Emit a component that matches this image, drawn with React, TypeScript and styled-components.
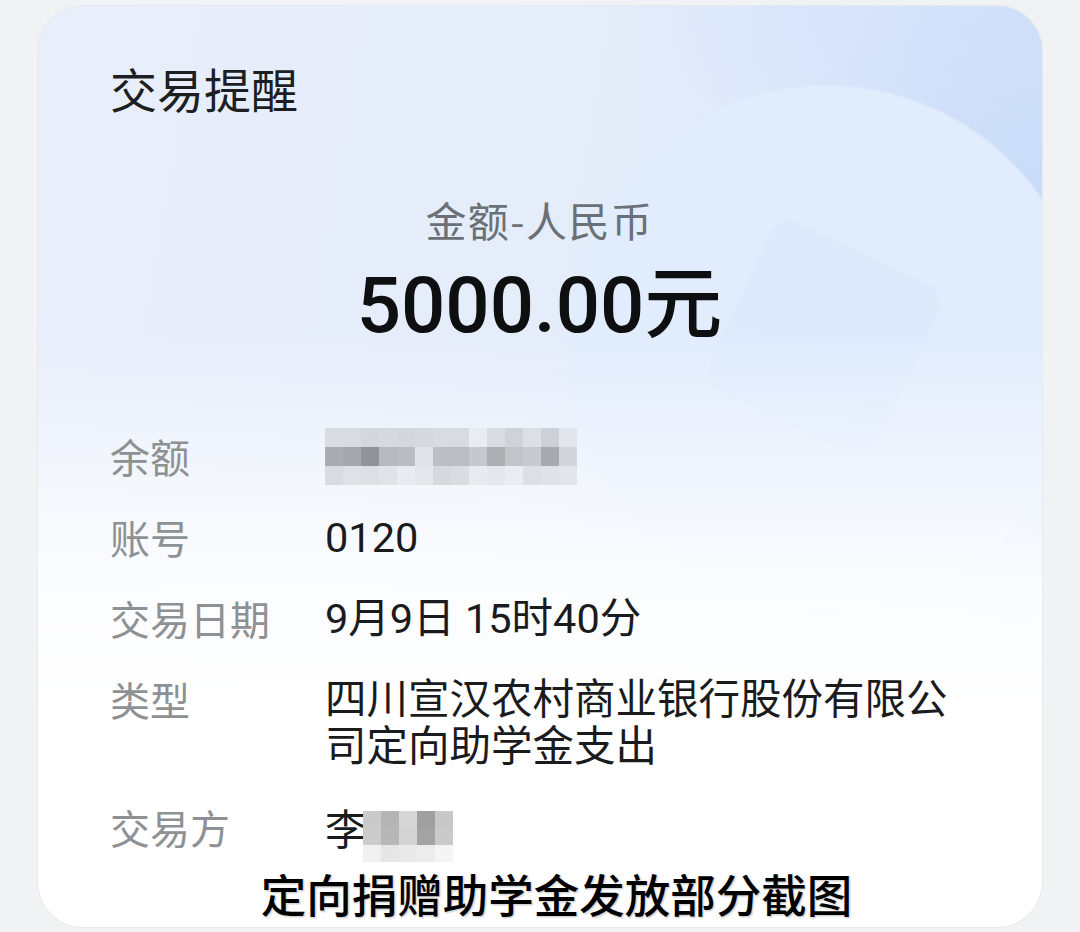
import React from "react";
import styled, { createGlobalStyle } from "styled-components";

const Global = createGlobalStyle`
  html, body { margin: 0; padding: 0; background: #f1f2f4; }
  body { font-family: Roboto, "Noto Sans CJK SC", sans-serif; }
`;

const Page = styled.div`
  width: 1080px;
  height: 932px;
  box-sizing: border-box;
  padding: 5px 37px 4px;
  display: flex;
  background: #f1f2f4;
`;

const Card = styled.div`
  position: relative;
  flex: 1;
  box-sizing: border-box;
  border-radius: 46px;
  border: 1px solid #e7e9ed;
  overflow: hidden;
  padding: 54px 73px 10px 72px;
  display: flex;
  flex-direction: column;
  background:
    linear-gradient(180deg, rgba(255,255,255,0) 0px, rgba(255,255,255,0) 330px, rgba(255,255,255,0.55) 480px, rgba(255,255,255,0.85) 580px, #ffffff 700px),
    radial-gradient(circle 262px at 789px 340px, #e1ecfc 0, #e1ecfc 259px, rgba(225,236,252,0) 262px),
    radial-gradient(ellipse 260px 240px at 100% 190px, rgba(198,218,248,0.9) 0%, rgba(202,220,248,0.5) 55%, rgba(205,222,249,0) 100%),
    radial-gradient(ellipse 420px 230px at 100% 0%, #d1e0fa 0%, rgba(212,226,250,0.6) 60%, rgba(220,232,251,0) 100%),
    linear-gradient(100deg, #e8eefa 0%, #e5edfa 45%, #e0eafb 75%, #dbe7fb 100%);
`;

const Diamond = styled.div`
  position: absolute;
  left: 693px;
  top: 239px;
  width: 186px;
  height: 186px;
  border-radius: 22px;
  transform: rotate(25deg);
  background: linear-gradient(160deg, rgba(210,225,250,0.3), rgba(222,234,252,0.1));
  pointer-events: none;
`;

const Content = styled.div`
  position: relative;
  display: flex;
  flex-direction: column;
`;

const Title = styled.h1`
  margin: 0;
  font-family: "Noto Sans CJK SC", sans-serif;
  font-size: 47px;
  line-height: 56px;
  font-weight: 400;
  color: #1c1e22;
`;

const AmountBlock = styled.div`
  display: flex;
  flex-direction: column;
  align-items: center;
  margin-top: 79px;
`;

const Currency = styled.div`
  font-family: "Noto Sans CJK SC", sans-serif;
  font-size: 41px;
  line-height: 48px;
  letter-spacing: 1.5px;
  color: #6a7076;
`;

const Amount = styled.div`
  margin-top: 16px;
  font-family: Roboto, "Noto Sans CJK SC", sans-serif;
  font-size: 78px;
  line-height: 94px;
  font-weight: 500;
  color: #0e0f10;
`;

const Rows = styled.div`
  display: flex;
  flex-direction: column;
  gap: 34px;
  margin-top: 80px;
`;

const Row = styled.div`
  display: grid;
  grid-template-columns: 215px 1fr;
  align-items: start;
`;

const Label = styled.div`
  font-family: "Noto Sans CJK SC", sans-serif;
  font-size: 40px;
  line-height: 47px;
  color: #8e9194;
`;

const Value = styled.div`
  display: flex;
  align-items: center;
  font-family: Roboto, "Noto Sans CJK SC", sans-serif;
  font-size: 41.5px;
  line-height: 47px;
  color: #1a1b1d;
  min-height: 47px;
`;

const Mosaic = styled.div<{ $cols: number; $cell: number; $rowH: number }>`
  display: grid;
  grid-template-columns: repeat(${(p) => p.$cols}, ${(p) => p.$cell}px);
  grid-auto-rows: ${(p) => p.$rowH}px;
  margin: -5px 0;
`;

const Cell = styled.div<{ $c: string }>`
  background: ${(p) => p.$c};
`;

const Caption = styled.div`
  margin-top: 9px;
  padding-left: 34px;
  text-align: center;
  font-family: "Noto Sans CJK SC", sans-serif;
  font-size: 45.5px;
  line-height: 54px;
  font-weight: 500;
  color: #000;
  text-shadow: 0 0 3px #fff, 1px 1px 2px rgba(0,0,0,0.35);
`;

const balanceCells = [
  ["#d9dce2", "#d8dbe1", "#d4d7de", "#d6d9df", "#d4d7de", "#d6d9df", "#d8dbe1", "#d8dbe1", "#e8ecf3", "#d9dce2", "#cfd3d9", "#dcdfe5", "#cdd0d6", "#e2e6ec"],
  ["#a9acb2", "#a5a8ae", "#909398", "#b7bac0", "#b9bcc2", "#e0e3e9", "#bbbec4", "#babdc3", "#c5c8ce", "#acafb2", "#c2c5ca", "#c7cacf", "#a6a9ae", "#d2d5da"],
  ["#d8dbe1", "#dfe2e6", "#dcdfe4", "#e0e3e8", "#e8ebef", "#e4e7eb", "#d6d9de", "#d9dce1", "#e7eaee", "#e4e7eb", "#e9ecf0", "#dcdfe3", "#dfe2e6", "#e2e5e9"],
];

const nameCells = [
  ["#cacaca", "#b5b5b5", "#d6d6d6", "#a0a0a0", "#c8c8c8"],
  ["#cbcbcb", "#b7b7b7", "#d4d4d4", "#a3a3a3", "#cacaca"],
  ["#f0f0f0", "#e6e6e6", "#e9e9e9", "#ececec", "#f5f5f5"],
];

function Pixelated({ grid, cell, rowH }: { grid: string[][]; cell: number; rowH: number }) {
  return (
    <Mosaic $cols={grid[0].length} $cell={cell} $rowH={rowH}>
      {grid.flat().map((c, i) => (
        <Cell key={i} $c={c} />
      ))}
    </Mosaic>
  );
}

const NameWrap = styled.div`
  display: flex;
  align-items: center;
`;

const NameMosaic = styled.div`
  margin-left: -4px;
  margin-top: 12px;
`;

export default function App() {
  return (
    <>
      <Global />
      <Page>
        <Card>
          <Diamond />
          <Content>
            <Title>交易提醒</Title>
            <AmountBlock>
              <Currency>金额-人民币</Currency>
              <Amount>5000.00元</Amount>
            </AmountBlock>
            <Rows>
              <Row>
                <Label>余额</Label>
                <Value>
                  <Pixelated grid={balanceCells} cell={18} rowH={19} />
                </Value>
              </Row>
              <Row>
                <Label>账号</Label>
                <Value>0120</Value>
              </Row>
              <Row>
                <Label>交易日期</Label>
                <Value>9月9日 15时40分</Value>
              </Row>
              <Row>
                <Label>类型</Label>
                <Value>四川宣汉农村商业银行股份有限公司定向助学金支出</Value>
              </Row>
              <Row>
                <Label>交易方</Label>
                <Value>
                  <NameWrap>
                    李
                    <NameMosaic>
                      <Pixelated grid={nameCells} cell={18} rowH={17} />
                    </NameMosaic>
                  </NameWrap>
                </Value>
              </Row>
            </Rows>
            <Caption>定向捐赠助学金发放部分截图</Caption>
          </Content>
        </Card>
      </Page>
    </>
  );
}
